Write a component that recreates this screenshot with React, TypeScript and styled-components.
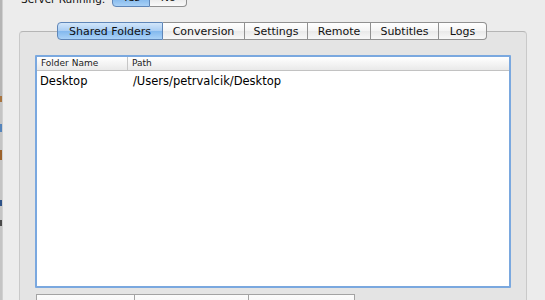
import React from 'react';
import styled, { createGlobalStyle } from 'styled-components';

const GlobalStyle = createGlobalStyle`
  html, body {
    margin: 0;
    padding: 0;
    background: #ececec;
  }
  body {
    font-family: "DejaVu Sans", "Liberation Sans", sans-serif;
    overflow: hidden;
  }
`;

const tabs = [
  { label: 'Shared Folders', width: 106 },
  { label: 'Conversion', width: 82 },
  { label: 'Settings', width: 63 },
  { label: 'Remote', width: 63 },
  { label: 'Subtitles', width: 68 },
  { label: 'Logs', width: 48 },
];

const folders = [{ name: 'Desktop', path: '/Users/petrvalcik/Desktop' }];

const App: React.FC = () => {
  return (
    <Window>
      <GlobalStyle />
      <BackEdge />
      <Main>
        <TopBar>
          <Label>Server Running:</Label>
          <Segmented>
            <Segment $active>Yes</Segment>
            <Segment $last>No</Segment>
          </Segmented>
        </TopBar>

        <TabRow>
          {tabs.map((t, i) => (
            <Tab
              key={t.label}
              $w={t.width}
              $active={i === 0}
              $first={i === 0}
              $last={i === tabs.length - 1}
            >
              {t.label}
            </Tab>
          ))}
        </TabRow>

        <GroupBox>
          <ListFrame>
            <HeaderRow>
              <HeaderCell $divider>Folder Name</HeaderCell>
              <HeaderCell>Path</HeaderCell>
            </HeaderRow>
            {folders.map(f => (
              <Row key={f.path}>
                <Cell>{f.name}</Cell>
                <Cell $path>{f.path}</Cell>
              </Row>
            ))}
          </ListFrame>

          <ButtonBar>
            <BarButton $w={99} />
            <BarButton $w={115} />
            <BarButton $w={107} />
          </ButtonBar>
        </GroupBox>
      </Main>
    </Window>
  );
};

const Window = styled.div`
  width: 545px;
  height: 300px;
  display: flex;
  overflow: hidden;
  background: #ececec;
`;

const BackEdge = styled.div`
  width: 2px;
  flex: none;
  border-right: 1px solid #d0d0d0;
  background: linear-gradient(
    to bottom,
    #b5b5b5 0 96px,
    #a8743f 96px 102px,
    #c4c4c4 102px 124px,
    #5584bb 124px 132px,
    #c4c4c4 132px 150px,
    #9c622b 150px 160px,
    #c4c4c4 160px 200px,
    #2e5287 200px 206px,
    #c4c4c4 206px 220px,
    #4a4a4a 220px 226px,
    #c4c4c4 226px
  );
`;

const Main = styled.div`
  flex: 1;
  display: flex;
  flex-direction: column;
`;

const TopBar = styled.div`
  display: flex;
  align-items: flex-end;
  gap: 7px;
  height: 18px;
  margin-top: -11px;
  padding-left: 18px;
`;

const Label = styled.span`
  font-size: 10.5px;
  line-height: 12px;
  color: #111;
  padding-bottom: 2px;
`;

const Segmented = styled.div`
  display: flex;
  height: 18px;
`;

const Segment = styled.div<{ $active?: boolean; $last?: boolean }>`
  width: ${p => (p.$last ? 37 : 38)}px;
  box-sizing: border-box;
  display: flex;
  align-items: flex-end;
  justify-content: center;
  padding-bottom: 2px;
  font-size: 11px;
  color: #111;
  border: 1px solid ${p => (p.$active ? '#5f86b8' : '#8f8f8f')};
  border-left-width: ${p => (p.$last ? 0 : 1)}px;
  border-radius: ${p => (p.$last ? '0 0 4px 0' : '0 0 0 4px')};
  background: ${p =>
    p.$active
      ? 'linear-gradient(to bottom, #cfe3f8 0%, #a6cbf2 50%, #80b6ec 51%, #a9d1f6 100%)'
      : 'linear-gradient(to bottom, #ffffff 0%, #f3f3f3 50%, #e8e8e8 51%, #fafafa 100%)'};
`;

const TabRow = styled.div`
  display: flex;
  margin-top: 15px;
  margin-bottom: -9px;
  margin-left: 16px;
  padding-left: 38px;
  position: relative;
  z-index: 1;
`;

const Tab = styled.div<{ $w: number; $active?: boolean; $first?: boolean; $last?: boolean }>`
  width: ${p => p.$w}px;
  height: 18px;
  box-sizing: border-box;
  display: flex;
  align-items: center;
  justify-content: center;
  font-size: 11px;
  color: #111;
  border: 1px solid ${p => (p.$active ? '#5f86b8' : '#919191')};
  border-left-width: ${p => (p.$first ? 1 : 0)}px;
  border-radius: ${p => (p.$first ? '4px 0 0 4px' : p.$last ? '0 4px 4px 0' : '0')};
  background: ${p =>
    p.$active
      ? 'linear-gradient(to bottom, #d2e6fa 0%, #a9cdf3 50%, #82b8ee 51%, #aad2f7 100%)'
      : 'linear-gradient(to bottom, #ffffff 0%, #f4f4f4 50%, #e9e9e9 51%, #f8f8f8 100%)'};
`;

const GroupBox = styled.div`
  margin-left: 16px;
  width: 508px;
  height: 300px;
  box-sizing: border-box;
  border: 1px solid #c9c9c9;
  border-top-color: #b5b5b5;
  border-radius: 4px;
  background: #e4e4e4;
  padding: 23px 15px 0 15px;
`;

const ListFrame = styled.div`
  height: 233px;
  box-sizing: border-box;
  border: 2px solid #7aa8df;
  border-radius: 1px;
  background: #ffffff;
`;

const HeaderRow = styled.div`
  display: grid;
  grid-template-columns: 91px 1fr;
  height: 14px;
  box-sizing: border-box;
  border-bottom: 1px solid #c2c2c2;
  background: linear-gradient(to bottom, #ffffff 0%, #f4f4f4 50%, #e9e9e9 100%);
`;

const HeaderCell = styled.div<{ $divider?: boolean }>`
  font-size: 9px;
  line-height: 13px;
  color: #222;
  padding-left: 4px;
  border-right: ${p => (p.$divider ? '1px solid #c6c6c6' : 'none')};
  white-space: nowrap;
`;

const Row = styled.div`
  display: grid;
  grid-template-columns: 92px 1fr;
  height: 17px;
  padding-top: 2px;
`;

const Cell = styled.div<{ $path?: boolean }>`
  font-size: 11.5px;
  line-height: 16px;
  color: #000;
  padding-left: ${p => (p.$path ? 4 : 3)}px;
  white-space: nowrap;
`;

const ButtonBar = styled.div`
  display: flex;
  margin-top: 6px;
  margin-left: 1px;
`;

const BarButton = styled.div<{ $w: number }>`
  width: ${p => p.$w}px;
  height: 22px;
  box-sizing: border-box;
  border: 1px solid #a3a3a3;
  margin-right: -1px;
  background: linear-gradient(to bottom, #fbfbfb 0%, #f0f0f0 100%);
`;

export default App;
